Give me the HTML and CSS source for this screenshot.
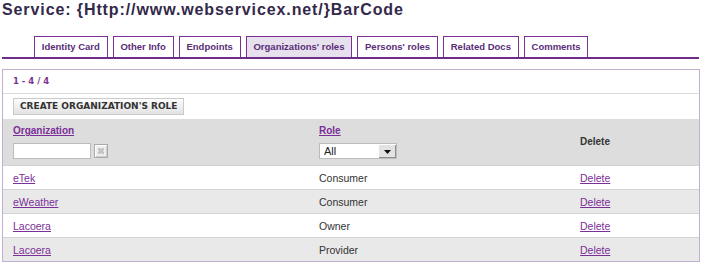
FILE: index.html
```html
<!DOCTYPE html>
<html lang="en">
<head>
    <meta charset="UTF-8">
    <title>Service: {Http://www.webservicex.net/}BarCode</title>
    <link rel="stylesheet" href="styles.css">
</head>
<body>
    <h1 class="page-title">Service: {Http://www.webservicex.net/}BarCode</h1>

    <ul class="tabs">
        <li class="tab"><a href="#">Identity Card</a></li>
        <li class="tab"><a href="#">Other Info</a></li>
        <li class="tab"><a href="#">Endpoints</a></li>
        <li class="tab tab-active"><a href="#">Organizations' roles</a></li>
        <li class="tab"><a href="#">Persons' roles</a></li>
        <li class="tab"><a href="#">Related Docs</a></li>
        <li class="tab"><a href="#">Comments</a></li>
    </ul>

    <div class="panel">
        <div class="pager">1 - 4 / 4</div>
        <div class="actions">
            <button type="button" class="btn">CREATE ORGANIZATION'S ROLE</button>
        </div>
        <table class="grid">
            <thead>
                <tr>
                    <th class="col-org">
                        <a href="#" class="sort">Organization</a>
                        <div class="filter">
                            <input type="text" class="filter-input">
                            <button type="button" class="clear-btn" title="Clear">
                                <svg width="8" height="8" viewBox="0 0 8 8"><path d="M1 1h2l1 1 1-1h2v2l-1 1 1 1v2h-2l-1-1-1 1h-2v-2l1-1-1-1z" fill="#c4c4c4"/></svg>
                            </button>
                        </div>
                    </th>
                    <th class="col-role">
                        <a href="#" class="sort">Role</a>
                        <div class="filter">
                            <div class="select">
                                <select>
                                    <option>All</option>
                                    <option>Consumer</option>
                                    <option>Owner</option>
                                    <option>Provider</option>
                                </select>
                                <span class="select-arrow">
                                    <svg width="7" height="4" viewBox="0 0 7 4"><path d="M0 0h7L3.5 4z" fill="#111"/></svg>
                                </span>
                            </div>
                        </div>
                    </th>
                    <th class="col-del">Delete</th>
                </tr>
            </thead>
            <tbody>
                <tr><td><a href="#">eTek</a></td><td>Consumer</td><td><a href="#">Delete</a></td></tr>
                <tr><td><a href="#">eWeather</a></td><td>Consumer</td><td><a href="#">Delete</a></td></tr>
                <tr><td><a href="#">Lacoera</a></td><td>Owner</td><td><a href="#">Delete</a></td></tr>
                <tr><td><a href="#">Lacoera</a></td><td>Provider</td><td><a href="#">Delete</a></td></tr>
            </tbody>
        </table>
    </div>
</body>
</html>
```

FILE: styles.css
```css
body { margin: 0; font-family: "Liberation Sans", Arial, sans-serif; background: #fff; color: #333; }
a { color: #7b2f98; }

.page-title { margin: 0; padding: 1px 0 0 2px; font-size: 16px; line-height: 18px; letter-spacing: 0.9px; color: #33294a; }

.tabs { list-style: none; display: flex; gap: 5px; margin: 17px 7px 0 2px; padding: 0 0 0 32px; border-bottom: 2px solid #6e2d86; }
.tab { border: 1px solid #7b2f94; border-bottom: none; }
.tab a { display: block; padding: 0 6.8px; height: 20px; line-height: 20px; font-size: 9.5px; font-weight: bold; color: #5a2d78; text-decoration: none; }
.tab-active { background: #e7e0ed; }

.panel { margin: 10px 6px 0 2px; border: 1px solid #c4afd0; }
.pager { height: 23px; line-height: 23px; padding: 0 10px; font-family: "DejaVu Sans", sans-serif; font-size: 8.5px; font-weight: bold; color: #7a3490; border-bottom: 1px solid #dadada; }
.actions { padding: 4px 10px 4px; }
.btn { display: block; height: 17px; padding: 0 6px; border: 1px solid #cacaca; background: linear-gradient(#fdfdfd, #e2e2e2); font-family: "DejaVu Sans", sans-serif; font-size: 9px; font-weight: bold; color: #333; line-height: 15px; cursor: pointer; }

.grid { width: 100%; border-collapse: collapse; font-size: 10.5px; }
.grid th { background: #dddddd; text-align: left; vertical-align: top; padding: 6px 10px 5px; height: 35px; }
.grid th.col-del { vertical-align: middle; font-size: 10px; color: #333; padding-top: 4px; }
.col-org { width: 286px; }
.col-role { width: 241px; }
.sort { font-size: 10px; font-weight: bold; display: block; line-height: 12px; }
.filter { display: flex; align-items: center; gap: 2px; margin-top: 6px; }
.filter-input { width: 78px; height: 16px; box-sizing: border-box; border: 1px solid #bcbcbc; padding: 0 2px; font-size: 11px; background: #fff; }
.clear-btn { width: 14px; height: 14px; margin-left: 1px; padding: 0; border: 1px solid #a9a9a9; background: #eeeeee; box-shadow: inset 1px 1px 0 #fff, inset -1px -1px 0 #cfcfcf; display: flex; align-items: center; justify-content: center; }

.select { display: flex; width: 78px; height: 16px; box-sizing: border-box; border: 1px solid #bcbcbc; background: #fff; }
.select select { flex: 1; min-width: 0; appearance: none; border: none; background: transparent; padding: 0 4px; font-family: "Liberation Sans", Arial, sans-serif; font-size: 11px; color: #222; outline: none; }
.select-arrow { width: 17px; display: flex; align-items: center; justify-content: center; background: #e3e3e3; border-left: 1px solid #fff; border-top: 1px solid #fff; box-shadow: inset -1px -1px 0 #8f8f8f; }

.grid td { height: 23px; padding: 0 10px; border-top: 1px solid #d3d3d3; color: #333; }
.grid tbody tr:nth-child(even) td { background: #e9e9e9; }
```
